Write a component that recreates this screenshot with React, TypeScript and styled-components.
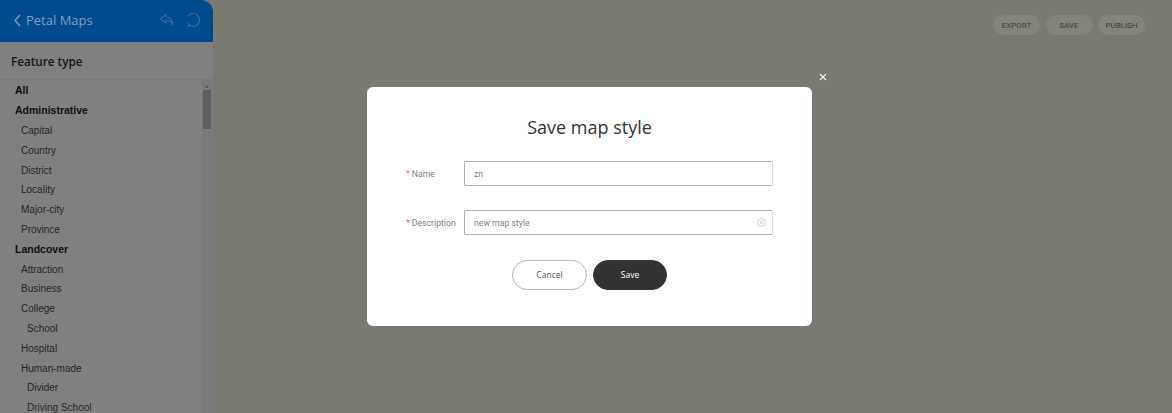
import React from 'react';
import styled, { createGlobalStyle } from 'styled-components';

const GlobalStyle = createGlobalStyle`
    html, body {
        margin: 0;
        padding: 0;
        height: 100%;
        overflow: hidden;
        font-family: "Liberation Sans", Arial, sans-serif;
    }
`

const Page = styled.div`
    position: relative;
    display: flex;
    width: 1172px;
    height: 413px;
    overflow: hidden;
    background: #797a72;
`

const Sidebar = styled.aside`
    display: flex;
    flex-direction: column;
    width: 213px;
    height: 413px;
    flex-shrink: 0;
    background: #808080;
    border-radius: 0 12px 0 0;
    overflow: hidden;
`

const Header = styled.header`
    display: flex;
    align-items: center;
    height: 42px;
    flex-shrink: 0;
    padding: 0 12px 2px 14px;
    box-sizing: border-box;
    background: #004a8e;
    color: #7f9fc0;
`

const BrandName = styled.span`
    flex: 1;
    margin-left: 5px;
    font-family: "Open Sans", sans-serif;
    font-size: 13px;
`

const HeaderIcon = styled.svg`
    width: 16px;
    height: 16px;
    margin-left: 10px;
    fill: none;
    stroke: #2f6ba6;
    stroke-width: 1.2;
`

const SectionTitle = styled.div`
    display: flex;
    align-items: center;
    height: 37px;
    flex-shrink: 0;
    padding-left: 11px;
    border-bottom: 1px solid #797979;
    font-family: "Open Sans", sans-serif;
    font-size: 11.7px;
    font-weight: 600;
    color: #151515;
`

const ListArea = styled.div`
    display: flex;
    flex: 1;
    min-height: 0;
`

const List = styled.ul`
    flex: 1;
    margin: 0;
    padding: 1.4px 0 0;
    list-style: none;
    overflow: hidden;
`

const Row = styled.li<{ $level: number }>`
    height: 19.8px;
    line-height: 19.8px;
    padding-left: ${p => (p.$level === 0 ? 15 : p.$level === 1 ? 21 : 27)}px;
    font-size: ${p => (p.$level === 0 ? 10.5 : 10)}px;
    font-weight: ${p => (p.$level === 0 ? 700 : 400)};
    color: ${p => (p.$level === 0 ? '#0f0f0f' : '#262626')};
    white-space: nowrap;
`

const Scrollbar = styled.div`
    position: relative;
    width: 11px;
    flex-shrink: 0;
    background: #7a7a7a;
`

const ScrollArrow = styled.div`
    position: absolute;
    top: 5px;
    left: 3px;
    width: 0;
    height: 0;
    border-left: 2.5px solid transparent;
    border-right: 2.5px solid transparent;
    border-bottom: 3px solid #5a5a5a;
`

const ScrollThumb = styled.div`
    position: absolute;
    top: 10px;
    left: 1px;
    width: 8px;
    height: 39px;
    background: #5f5f5f;
`

const Main = styled.main`
    flex: 1;
`

const Toolbar = styled.div`
    display: flex;
    justify-content: flex-end;
    gap: 5.5px;
    padding: 15px 27px 0 0;
`

const ToolButton = styled.button`
    width: 47px;
    height: 20px;
    padding: 0;
    border: none;
    border-radius: 10px;
    background: #83847c;
    font-family: Roboto, sans-serif;
    font-size: 8px;
    color: #404040;
`

const Overlay = styled.div`
    position: absolute;
    inset: 0;
    display: flex;
    justify-content: center;
    align-items: flex-start;
    padding: 87px 0 0 7px;
    box-sizing: border-box;
`

const Modal = styled.div`
    position: relative;
    display: flex;
    flex-direction: column;
    width: 445px;
    height: 239px;
    padding: 29px 39px 0;
    box-sizing: border-box;
    background: #fff;
    border-radius: 6px;
`

const CloseButton = styled.svg`
    position: absolute;
    top: -14px;
    right: -15px;
    width: 8px;
    height: 8px;
    stroke: #f2f2f2;
    stroke-width: 1.1;
`

const Title = styled.h2`
    margin: 0 0 23px;
    height: 22px;
    line-height: 22px;
    text-align: center;
    font-family: "Open Sans", sans-serif;
    font-size: 18px;
    font-weight: 400;
    color: #333;
`

const Field = styled.div`
    display: flex;
    align-items: center;
    height: 25px;
    margin-bottom: 24px;
`

const Label = styled.label`
    width: 58px;
    flex-shrink: 0;
    font-family: Roboto, sans-serif;
    font-size: 8.7px;
    color: #808080;
    white-space: nowrap;
`

const Required = styled.span`
    margin-right: 2px;
    color: #f0696f;
`

const InputBox = styled.div`
    display: flex;
    align-items: center;
    justify-content: space-between;
    width: 310px;
    height: 25px;
    padding: 0 6px 0 9px;
    box-sizing: border-box;
    border: 1px solid #b0b0b0;
    border-right-color: #dcdcdc;
    border-radius: 2px;
    font-family: Roboto, sans-serif;
    font-size: 8.7px;
    color: #808080;
`

const ClearIcon = styled.svg`
    width: 9px;
    height: 9px;
    fill: none;
    stroke: #c4c4cc;
    stroke-width: 0.9;
`

const Actions = styled.div`
    display: flex;
    justify-content: center;
    gap: 6px;
    margin-top: 1px;
`

const ActionButton = styled.button<{ $primary?: boolean }>`
    width: ${p => (p.$primary ? 74 : 75)}px;
    height: 30px;
    padding: 0 0 2px;
    border: 1px solid ${p => (p.$primary ? '#333' : '#b5b5b5')};
    border-radius: 15px;
    background: ${p => (p.$primary ? '#333' : '#fff')};
    color: ${p => (p.$primary ? '#fff' : '#555')};
    font-family: "Open Sans", sans-serif;
    font-size: 8.5px;
    font-weight: ${p => (p.$primary ? 500 : 400)};
`

const rows: [string, number][] = [
    ['All', 0],
    ['Administrative', 0],
    ['Capital', 1],
    ['Country', 1],
    ['District', 1],
    ['Locality', 1],
    ['Major-city', 1],
    ['Province', 1],
    ['Landcover', 0],
    ['Attraction', 1],
    ['Business', 1],
    ['College', 1],
    ['School', 2],
    ['Hospital', 1],
    ['Human-made', 1],
    ['Divider', 2],
    ['Driving School', 2],
]

export default function App() {
    return (
        <Page>
            <GlobalStyle />
            <Sidebar>
                <Header>
                    <svg width="7" height="13" viewBox="0 0 7 13" fill="none" stroke="#7f9fc0" strokeWidth="1.3">
                        <path d="M6 1 1 6.5 6 12" />
                    </svg>
                    <BrandName>Petal Maps</BrandName>
                    <HeaderIcon viewBox="0 0 16 16">
                        <path d="M7 2.5 1.5 7 7 11V8.2c3 0 5.2 1 6.8 5 .2-4.6-2-8-6.8-8.2z" />
                    </HeaderIcon>
                    <HeaderIcon viewBox="0 0 16 16">
                        <path d="M3.5 12.5A6.5 6.5 0 1 0 3 4" />
                        <path d="M1.5 14.5l3-.8-.8-3" />
                    </HeaderIcon>
                </Header>
                <SectionTitle>Feature type</SectionTitle>
                <ListArea>
                    <List>
                        {rows.map(([label, level]) => (
                            <Row $level={level} key={label}>{label}</Row>
                        ))}
                    </List>
                    <Scrollbar>
                        <ScrollArrow />
                        <ScrollThumb />
                    </Scrollbar>
                </ListArea>
            </Sidebar>
            <Main>
                <Toolbar>
                    <ToolButton>EXPORT</ToolButton>
                    <ToolButton>SAVE</ToolButton>
                    <ToolButton>PUBLISH</ToolButton>
                </Toolbar>
            </Main>
            <Overlay>
                <Modal>
                    <CloseButton viewBox="0 0 8 8">
                        <path d="M1 1l6 6M7 1 1 7" />
                    </CloseButton>
                    <Title>Save map style</Title>
                    <Field>
                        <Label><Required>*</Required>Name</Label>
                        <InputBox>zn</InputBox>
                    </Field>
                    <Field>
                        <Label><Required>*</Required>Description</Label>
                        <InputBox>
                            new map style
                            <ClearIcon viewBox="0 0 10 10">
                                <circle cx="5" cy="5" r="4.3" />
                                <path d="M3.3 3.3l3.4 3.4M6.7 3.3 3.3 6.7" />
                            </ClearIcon>
                        </InputBox>
                    </Field>
                    <Actions>
                        <ActionButton>Cancel</ActionButton>
                        <ActionButton $primary>Save</ActionButton>
                    </Actions>
                </Modal>
            </Overlay>
        </Page>
    )
}
